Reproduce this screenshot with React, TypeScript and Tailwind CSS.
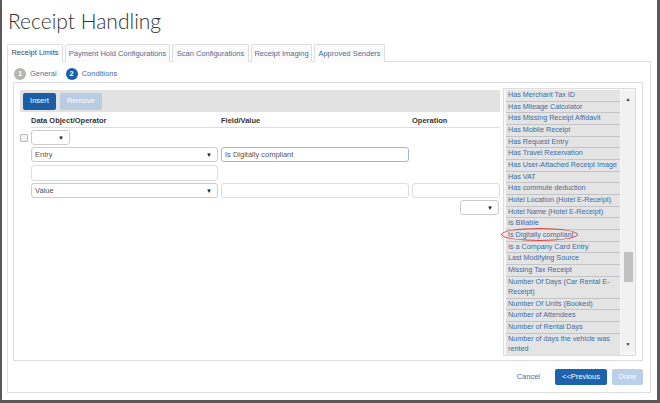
const tabs = [
  { label: "Receipt Limits", w: "w-[56px]", active: true },
  { label: "Payment Hold Configurations", w: "w-[105px]" },
  { label: "Scan Configurations", w: "w-[77px]" },
  { label: "Receipt Imaging", w: "w-[61px]" },
  { label: "Approved Senders", w: "w-[71px]" },
];

const items = [
  "Has Merchant Tax ID",
  "Has Mileage Calculator",
  "Has Missing Receipt Affidavit",
  "Has Mobile Receipt",
  "Has Request Entry",
  "Has Travel Reservation",
  "Has User-Attached Receipt Image",
  "Has VAT",
  "Has commute deduction",
  "Hotel Location (Hotel E-Receipt)",
  "Hotel Name (Hotel E-Receipt)",
  "Is Billable",
  "Is Digitally compliant",
  "Is a Company Card Entry",
  "Last Modifying Source",
  "Missing Tax Receipt",
  "Number Of Days (Car Rental E-Receipt)",
  "Number Of Units (Booked)",
  "Number of Attendees",
  "Number of Rental Days",
  "Number of days the vehicle was rented",
  "Odometer End",
];

const Caret = () => <span className="text-[6px] text-[#222] leading-none">▼</span>;

const Select = ({ text = "", w }: { text?: string; w: string }) => (
  <div className={`${w} h-[15px] border border-[#cccccc] rounded-[3px] bg-white flex items-center justify-between pl-[3px] pr-[5px] text-[#555]`}>
    <span>{text}</span>
    <Caret />
  </div>
);

const Input = ({ text = "", w, focus }: { text?: string; w: string; focus?: boolean }) => (
  <div className={`${w} h-[15px] border ${focus ? "border-[#9fb8d4]" : "border-[#dddddd]"} rounded-[3px] bg-white flex items-center pl-[3px] text-[#555]`}>
    {text}
  </div>
);

const App = () => {
  return (
    <div className="w-[660px] h-[403px] bg-white border-l-2 border-r-[3px] border-b-[3px] border-[#595959] overflow-hidden font-['Liberation_Sans',Arial,sans-serif] text-[7.5px]">
      <div className="pl-[5px] pr-[6px]">
        {/* title */}
        <h1 className="font-['Lato',sans-serif] font-light text-[21px] leading-[24px] text-[#333] pl-[1px] pt-[9px] h-[44px]">
          Receipt Handling
        </h1>

        {/* tabs */}
        <div className="flex gap-[2px] h-[18px] relative z-10">
          {tabs.map((t) => (
            <div
              key={t.label}
              className={`${t.w} flex items-center justify-center border border-[#dddddd] rounded-t-[2px] whitespace-nowrap ${
                t.active ? "bg-white border-b-white text-[#444]" : "bg-[#fbfbfb] border-b-0 text-[#4a6f96]"
              }`}
            >
              {t.label}
            </div>
          ))}
        </div>

        {/* tab content */}
        <div className="h-[332px] border border-[#dddddd] -mt-px pl-[5px] pr-[7px] flex flex-col">
          <div className="flex items-center h-[20px] pt-[4px] gap-[4px] pl-[1px]">
            <span className="w-[12px] h-[12px] rounded-full bg-[#b5b5b5] text-white font-bold flex items-center justify-center">1</span>
            <span className="text-[#4a72a0] mr-[5px]">General</span>
            <span className="w-[12px] h-[12px] rounded-full bg-[#1c5ea6] text-white font-bold flex items-center justify-center">2</span>
            <span className="text-[#3d6ea6]">Conditions</span>
          </div>

          {/* inner box */}
          <div className="h-[279px] border border-[#dcdcdc] p-[6px] flex gap-[3px]">
            {/* conditions editor */}
            <div className="w-[480px] pt-px">
              <div className="h-[22px] bg-[#e2e2e2] flex items-center gap-[4px] px-[3px]">
                <button className="w-[33px] h-[17px] bg-[#1c5ea6] text-white rounded-[2px]">Insert</button>
                <button className="w-[42px] h-[17px] bg-[#b9cde2] text-white rounded-[2px]">Remove</button>
              </div>

              <div className="ml-[11px] mt-[3px] h-[13px] border-b border-[#dddddd] flex items-center font-bold text-[#333]">
                <span className="w-[190px]">Data Object/Operator</span>
                <span className="w-[191px]">Field/Value</span>
                <span>Operation</span>
              </div>

              <div className="flex items-center gap-[3px] mt-[2px]">
                <span className="w-[8px] h-[8px] border border-[#bbbbbb] bg-[#f2f2f2] rounded-[1px]"></span>
                <Select w="w-[39px]" />
              </div>

              <div className="flex gap-[3px] pl-[11px] mt-[2px]">
                <Select text="Entry" w="w-[187px]" />
                <Input text="Is Digitally compliant" w="w-[188px]" focus />
              </div>

              <div className="flex gap-[3px] pl-[11px] mt-[3px]">
                <div className="w-[187px] h-[16px] border border-[#dddddd] rounded-[3px]"></div>
              </div>

              <div className="flex gap-[3px] pl-[11px] mt-[2px]">
                <Select text="Value" w="w-[187px]" />
                <Input w="w-[188px]" />
                <Input w="w-[88px]" />
              </div>

              <div className="flex justify-end pr-px mt-[2px]">
                <Select w="w-[39px]" />
              </div>
            </div>

            {/* field list */}
            <div className="relative w-[133px] -mt-px">
              <div className="h-[268px] border border-[#dddddd] bg-[#f7f7f7] flex pl-[2px] pt-px overflow-hidden">
                <div className="w-[115px] text-[7.2px]">
                  {items.map((it) => (
                    <div key={it} className="bg-[#e4e4e4] border-b border-[#c4c4c4] text-[#3c6ca3] pl-[2px] leading-[10.65px]">
                      {it}
                    </div>
                  ))}
                </div>
                <div className="w-[14px] ml-px mt-[1px] mb-[3px] bg-[#f1f1f1] flex flex-col items-center">
                  <span className="text-[5px] text-[#333] pt-[6px] leading-none">▲</span>
                  <div className="w-[9px] h-[30px] bg-[#c1c1c1] mt-[150px]"></div>
                  <span className="text-[5px] text-[#333] mt-auto pb-[5px] leading-none">▼</span>
                </div>
              </div>
              <span className="absolute left-[-2px] top-[140px] w-[77px] h-[13px] border border-[#d9463f] rounded-[50%]"></span>
            </div>
          </div>

          {/* footer */}
          <div className="flex items-center justify-end gap-[5px] mt-[8px]">
            <span className="text-[#3d6ea6] mr-[10px] whitespace-nowrap">Cancel</span>
            <button className="w-[52px] h-[16px] bg-[#1c62ad] text-white rounded-[2px] whitespace-nowrap px-0">&lt;&lt;Previous</button>
            <button className="w-[31px] h-[16px] bg-[#b9d0e8] text-white rounded-[2px]">Done</button>
          </div>
        </div>
      </div>
    </div>
  );
};

export default App;
